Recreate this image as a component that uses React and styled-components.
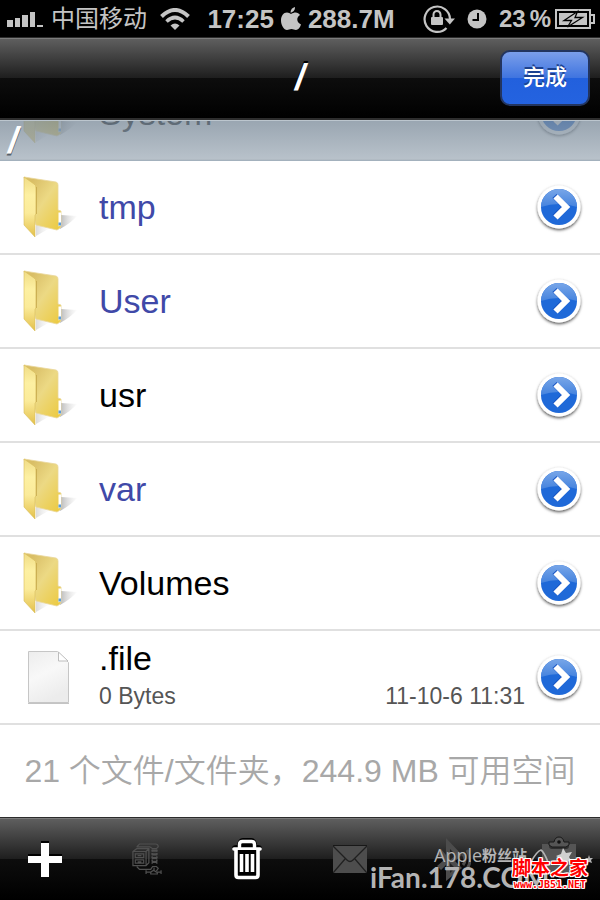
import React, { useState } from "react";
import styled, { createGlobalStyle } from "styled-components";

const GlobalStyle = createGlobalStyle`
  * {
    box-sizing: border-box;
  }
  body {
    margin: 0;
    background: #fff;
    font-family: "Liberation Sans", "Noto Sans CJK SC", sans-serif;
  }
  button {
    border: 0;
    padding: 0;
    background: none;
    font-family: inherit;
    cursor: pointer;
  }
  svg {
    display: block;
    flex: none;
  }
`;

const entries = [
  { name: "System", type: "folder" },
  { name: "tmp", type: "folder", link: true },
  { name: "User", type: "folder", link: true },
  { name: "usr", type: "folder" },
  { name: "var", type: "folder", link: true },
  { name: "Volumes", type: "folder" },
  { name: ".file", type: "file", size: "0 Bytes", date: "11-10-6 11:31" },
];

// Status bar icons

const SignalIcon = () => (
  <svg width="36" height="16" viewBox="0 0 36 16" fill="#c4c4c4">
    <path d="M0 9h6v7H0zM8 7h5v9H8zM15 4h6v12h-6zM23 1h5v15h-5zM30 14h6v2h-6z" />
  </svg>
);

const WifiIcon = () => (
  <svg width="30" height="22" viewBox="0 0 30 22" fill="none" stroke="#c4c4c4">
    <path d="M1.5 8.5Q15-4.5 28.5 8.5" strokeWidth="4" />
    <path d="M6.5 13.5Q15 5.5 23.5 13.5" strokeWidth="3.6" />
    <path d="M15 22l-4.500-4.500Q15 13.500 19.500 17.500z" fill="#c4c4c4" stroke="none" />
  </svg>
);

const AppleIcon = () => (
  <svg width="20" height="24" viewBox="0 0 20 24" fill="#c4c4c4">
    <path d="M10 7c2-1 3-1.500 4.500-1.500 2 0 3.500 1 4.500 2.500-4 2.500-3.500 7.500 1 9.500-1 3-3 5.500-5 5.500-1.800 0-2.500-1-4.500-1s-2.800 1-4.500 1C3 23 0 18 0 13.500 0 9 2.500 5.500 6 5.500c1.500 0 3 1 4 1.500z" />
    <path d="M9.500 5.500C9.500 2.500 11.500.5 14 0c.2 3-2 5.500-4.500 5.500z" />
  </svg>
);

const RotationLockIcon = () => (
  <svg width="32" height="30" viewBox="0 0 32 30" fill="#c4c4c4">
    <path
      d="M23.500 24A12.700 12.700 0 1 1 27 15"
      fill="none"
      stroke="#c4c4c4"
      strokeWidth="2.200"
    />
    <path d="M21.500 14.500H32l-5.200 6z" />
    <rect x="8" y="13" width="12" height="8" rx="1" />
    <path d="M10.500 13.500v-3a3.500 3.500 0 0 1 7 0v3" fill="none" stroke="#c4c4c4" strokeWidth="2" />
  </svg>
);

const ClockIcon = () => (
  <svg width="20" height="20" viewBox="0 0 20 20">
    <circle cx="10" cy="10" r="9.500" fill="#c4c4c4" />
    <path d="M11 4v7H5.500" fill="none" stroke="#000" strokeWidth="2" />
  </svg>
);

const BatteryIcon = () => (
  <svg width="40" height="20" viewBox="0 0 40 20">
    <rect x="1" y="1" width="34" height="18" fill="none" stroke="#c4c4c4" strokeWidth="2" />
    <path d="M35 6h4v8h-4" fill="none" stroke="#c4c4c4" strokeWidth="2" />
    <path d="M4 4h28v12H4z" fill="#c4c4c4" />
    <path
      d="M22.500 2.500L9 11.500h7.500L12.500 18 27.500 8.500H20z"
      fill="#c4c4c4"
      stroke="#000"
      strokeWidth="1.300"
    />
  </svg>
);

// List icons

const FolderIcon = () => (
  <svg width="60" height="64" viewBox="0 0 60 64">
    <defs>
      <linearGradient id="folderFront" x1="0" y1="0" x2="0" y2="1">
        <stop offset="0" stopColor="#f0dc86" />
        <stop offset="0.300" stopColor="#fdf0a2" />
        <stop offset="0.600" stopColor="#fbeb9a" />
        <stop offset="1" stopColor="#e3c04a" />
      </linearGradient>
      <linearGradient id="folderBack" x1="0" y1="0" x2="1" y2="1">
        <stop offset="0.150" stopColor="#d9be66" />
        <stop offset="0.500" stopColor="#ecd984" />
        <stop offset="1" stopColor="#ecc93c" />
      </linearGradient>
      <linearGradient id="folderShade" x1="0" y1="0" x2="1" y2="0">
        <stop offset="0" stopColor="#888" stopOpacity="0.600" />
        <stop offset="1" stopColor="#ccc" stopOpacity="0.050" />
      </linearGradient>
    </defs>
    <path d="M41 40l16 1q-6 7-17 13z" fill="url(#folderShade)" />
    <path d="M16 50l14 3-14 8z" fill="url(#folderShade)" opacity="0.500" />
    <path
      d="M4 2l32 5q2 .5 2 3v25l3 1v15q0 2-4 4l-21-5z"
      fill="url(#folderBack)"
      stroke="#ead79a"
      strokeWidth="0.800"
    />
    <path d="M38.500 37.500h2.500v13l-2.500 1z" fill="#fff" />
    <path d="M38.500 47.500h2.500v3h-2.500z" fill="#5d9dd8" />
    <path
      d="M4 2l10 7q2 1 2 4v26l-1 1v22L4 50z"
      fill="url(#folderFront)"
      stroke="#d9be5a"
      strokeWidth="0.600"
    />
    <path d="M16.400 12v27" stroke="#b99a3c" strokeWidth="1" opacity="0.600" />
  </svg>
);

const FileIcon = () => (
  <svg width="60" height="64" viewBox="0 0 60 64">
    <defs>
      <linearGradient id="paper" x1="0" y1="0" x2="0.400" y2="1">
        <stop offset="0" stopColor="#ededed" />
        <stop offset="0.500" stopColor="#f8f8f8" />
        <stop offset="1" stopColor="#ececec" />
      </linearGradient>
    </defs>
    <path d="M8.500 6.500h29l11 11v40h-40z" fill="url(#paper)" stroke="#c6c6c6" />
    <path d="M38.500 7v9h9.500z" fill="#fff" stroke="#bdbdbd" />
    <path d="M8 58.500h41" stroke="#c4c4c4" />
  </svg>
);

const DisclosureIcon = () => (
  <svg width="54" height="54" viewBox="0 0 54 54">
    <defs>
      <linearGradient id="discTop" x1="0" y1="0" x2="0" y2="1">
        <stop offset="0" stopColor="#78a6e8" />
        <stop offset="1" stopColor="#4583de" />
      </linearGradient>
      <filter id="discShadow" x="-30%" y="-30%" width="160%" height="170%">
        <feDropShadow dx="0" dy="1.500" stdDeviation="1.800" floodColor="#000" floodOpacity="0.700" />
      </filter>
    </defs>
    <circle cx="27" cy="27" r="21.500" fill="#fff" filter="url(#discShadow)" />
    <circle cx="27" cy="27" r="18" fill="#1f69d8" />
    <path d="M9 27a18 18 0 0 1 36 0Q27 21 9 27z" fill="url(#discTop)" />
    <path d="M22.500 16L33 26.500 22.500 37" fill="none" stroke="#1a57c4" strokeWidth="6" />
    <path d="M23.500 16.500L34 27 23.500 37.500" fill="none" stroke="#fff" strokeWidth="6" />
  </svg>
);

// Toolbar icons

const PlusIcon = () => (
  <svg width="34" height="36" viewBox="0 0 34 36">
    <path d="M13 0h8v13h13v8H21v13h-8V21H0v-8h13z" fill="#000" />
    <path d="M13 2h8v13h13v7H21v14h-8V22H0v-7h13z" fill="#fff" />
  </svg>
);

const ArchiveIcon = () => (
  <svg width="30" height="32" viewBox="0 0 32 34" fill="none" stroke="#505050" strokeWidth="1.300">
    <path d="M1 9l4-3h13v15l-3 3H1zM1 9h14v14M15 9l3-3" />
    <path d="M3.500 11.500h9v4h-9zM3.500 18h9v3.500h-9zM6 13.500h4M6 20h4" />
    <path d="M5 4l3-3h17q3 0 3 3l-2 2h-4l-3-2H5" />
    <path d="M5 25l3 3h12l2-3h4l2 2-2 3" />
    <path d="M21.500 7v15M26.500 7v15" strokeDasharray="2 1.500" strokeWidth="1.500" />
    <path d="M21 8h6M21 12h6M21 16h6M21 20h6" strokeWidth="2.500" />
    <path d="M15 31h5l3-2 3 2h5M15 29v4M31 29v4M20 31v2h7v-2M23.500 26v4" />
  </svg>
);

const TrashIcon = () => (
  <svg width="30" height="42" viewBox="0 0 30 42" fill="none" stroke="#fff">
    <path d="M0 10q0-3 5-3 1-7 6-7h8q5 0 6 7 5 0 5 3" fill="#000" stroke="none" />
    <path d="M7.500 10V6.500q0-3 3-3h9q3 0 3 3V10" strokeWidth="3.400" />
    <path d="M2 11h26" strokeWidth="3.600" strokeLinecap="round" />
    <path d="M4 12v25q0 2.500 2.500 2.500h17q2.500 0 2.500-2.500V12" strokeWidth="3.600" fill="#000" />
    <path d="M9.500 16v18M15 16v18M20.500 16v18" strokeWidth="3.600" />
  </svg>
);

const MailIcon = () => (
  <svg width="34" height="28" viewBox="0 0 34 28">
    <rect width="34" height="28" fill="#4d4d4d" />
    <path d="M0 0h34v1H0z" fill="#181818" />
    <path
      d="M0 1l14 14q3 3 6 0L34 1M0 28l12-14M34 28L22 14"
      fill="none"
      stroke="#202020"
      strokeWidth="1.300"
    />
  </svg>
);

const BluetoothIcon = () => (
  <svg width="34" height="46" viewBox="0 0 34 46" fill="none" stroke="#4c4c4c">
    <path d="M9 2l16 17-7 6 7 7L9 45V29l-5 5-4-4 7-6-7-6 4-5 5 6z" fill="#4c4c4c" stroke="none" />
    <path d="M13 13l6 6-6 5zM13 27l5 5-5 5z" fill="#222" stroke="none" />
    <path d="M26 18q4 6 0 11M30 14q6 10 0 19" strokeWidth="3" />
  </svg>
);

const ClipboardIcon = () => (
  <svg width="36" height="46" viewBox="0 0 36 46">
    <path d="M1 8h7v2q0 3 3 3h14q3 0 3-3V8h7v30H1z" fill="#555" />
    <path d="M8 9V6h5q1-5 5-5t5 5h5v3l-3 2H11z" fill="#555" stroke="#181818" />
    <circle cx="18" cy="6" r="1.800" fill="#111" />
  </svg>
);

const App = () => {
  const [path] = useState("/");

  return (
    <>
      <GlobalStyle />
      <Screen>
        <StatusBar>
          <StatusGroup $gap={8}>
            <SignalIcon />
            <Carrier>中国移动</Carrier>
            <WifiIcon />
          </StatusGroup>
          <StatusGroup $gap={7}>
            <StatusText>17:25</StatusText>
            <AppleIcon />
            <StatusText>288.7M</StatusText>
          </StatusGroup>
          <StatusGroup $gap={12} $end>
            <RotationLockIcon />
            <ClockIcon />
            <Battery>
              <span>23</span>
              <span>%</span>
              <BatteryIcon />
            </Battery>
          </StatusGroup>
        </StatusBar>

        <NavBar>
          <Title>{path}</Title>
          <DoneButton type="button">完成</DoneButton>
        </NavBar>

        <ListView>
          <PathHeader>{path}</PathHeader>
          <List>
            {entries.map((item) => (
              <Row key={item.name}>
                {item.type === "folder" ? <FolderIcon /> : <FileIcon />}
                <RowBody>
                  <Name $link={item.link}>{item.name}</Name>
                  {item.size && (
                    <Meta>
                      <span>{item.size}</span>
                      <span>{item.date}</span>
                    </Meta>
                  )}
                </RowBody>
                <button type="button" aria-label={item.name}>
                  <DisclosureIcon />
                </button>
              </Row>
            ))}
          </List>
          <Summary>21 个文件/文件夹，244.9 MB 可用空间</Summary>
        </ListView>

        <Toolbar>
          <button type="button" aria-label="添加">
            <PlusIcon />
          </button>
          <button type="button" aria-label="压缩">
            <ArchiveIcon />
          </button>
          <button type="button" aria-label="删除">
            <TrashIcon />
          </button>
          <button type="button" aria-label="邮件">
            <MailIcon />
          </button>
          <button type="button" aria-label="蓝牙">
            <BluetoothIcon />
          </button>
          <button type="button" aria-label="剪贴板">
            <ClipboardIcon />
          </button>
          <FanMark>
            <FanTop>
              Apple<b>粉丝站</b>
              <svg width="66" height="44" viewBox="0 0 66 44" fill="none" stroke="#b4b4b4">
                <path d="M4 16Q10 5 14 4q3 2 7 12" strokeWidth="1.600" />
                <path d="M25 37q1 6 6 4l2-8" strokeWidth="2" />
                <path
                  d="M36 2l3 5 6-1-3 5 3 5-6-1-4 4-1-6-5-3 5-2z"
                  fill="#d0d0d0"
                  stroke="none"
                />
                <path d="M62 9l1 3 3 0-2 2 1 3-3-1-3 1 1-3-2-2 3 0z" fill="#b4b4b4" stroke="none" />
              </svg>
            </FanTop>
            <FanSite>iFan.178.COM</FanSite>
          </FanMark>
          <SiteMark>
            <SiteName>脚本之家</SiteName>
            <SiteUrl>www.JB51.NET</SiteUrl>
          </SiteMark>
        </Toolbar>
      </Screen>
    </>
  );
};

export default App;

const Screen = styled.div`
  display: flex;
  flex-direction: column;
  height: 100vh;
  overflow: hidden;
`;

const StatusBar = styled.header`
  flex: none;
  display: grid;
  grid-template-columns: 1fr auto 1fr;
  align-items: center;
  height: 37px;
  padding: 0 5px 0 7px;
  background: #000;
  color: #c4c4c4;
`;

const StatusGroup = styled.div`
  display: flex;
  align-items: center;
  justify-content: ${(props) => (props.$end ? "flex-end" : "flex-start")};
  gap: ${(props) => props.$gap}px;
  white-space: nowrap;
`;

const Carrier = styled.span`
  margin-right: 5px;
  font-size: 24px;
  line-height: 36px;
`;

const StatusText = styled.span`
  font-size: 26px;
  font-weight: bold;
  line-height: 36px;
`;

const Battery = styled.div`
  display: flex;
  align-items: center;
  gap: 4px;
  font-size: 24px;
  font-weight: bold;
  line-height: 36px;
`;

const glossyBar = `
  border-top: 1px solid #2c2c2c;
  box-shadow: inset 0 1px #7c7c7c;
  background: linear-gradient(#606060, #1e1e1e 50%, #0d0d0d 50%, #000);
`;

const NavBar = styled.nav`
  ${glossyBar}
  flex: none;
  display: grid;
  grid-template-columns: 1fr auto 1fr;
  align-items: center;
  height: 83px;
  padding: 0 10px;
  border-bottom: 2px solid #2d2d2d;
`;

const Title = styled.h1`
  grid-column: 2;
  margin: 0;
  color: #fff;
  font-size: 36px;
  font-style: italic;
  line-height: 48px;
  text-shadow: 0 -2px #000;
`;

const DoneButton = styled.button`
  justify-self: end;
  width: 90px;
  height: 56px;
  border: 2px solid #23355f;
  border-radius: 10px;
  background: linear-gradient(#7b9fea, #3f74e0 50%, #2260dd 50%, #2463e0);
  color: #fff;
  font-size: 22px;
  font-weight: 500;
  line-height: 32px;
  text-shadow: 0 -2px #1c418f;
`;

const ListView = styled.main`
  position: relative;
  flex: 1;
  min-height: 0;
  display: flex;
  flex-direction: column;
  justify-content: flex-end;
  overflow: hidden;
  background: #fff;
`;

const PathHeader = styled.div`
  position: absolute;
  top: 0;
  left: 0;
  right: 0;
  height: 41px;
  padding: 0 8px;
  border-top: 1px solid #bcc6ce;
  border-bottom: 1px solid #a3b1bd;
  background: linear-gradient(rgba(122, 138, 153, 0.76), rgba(165, 177, 188, 0.78));
  color: #fff;
  font-size: 36px;
  font-style: italic;
  font-weight: bold;
  line-height: 40px;
  text-shadow: 0 2px #55606a;
`;

const List = styled.ul`
  margin: 0;
  padding: 0;
  list-style: none;
`;

const Row = styled.li`
  display: flex;
  align-items: center;
  height: 94px;
  padding: 0 14px 0 20px;
  border-bottom: 2px solid #e0e0e0;
`;

const RowBody = styled.div`
  flex: 1;
  padding: 0 7px 0 19px;
`;

const Name = styled.div`
  color: ${(props) => (props.$link ? "#4049a8" : "#000")};
  font-size: 34px;
  line-height: 44px;
`;

const Meta = styled.div`
  display: flex;
  justify-content: space-between;
  padding-bottom: 6px;
  color: #555;
  font-size: 23px;
  line-height: 32px;
`;

const Summary = styled.p`
  margin: 0;
  color: #a8a8a8;
  font-size: 32px;
  font-weight: 350;
  line-height: 92px;
  text-align: center;
  white-space: nowrap;
`;

const Toolbar = styled.footer`
  ${glossyBar}
  position: relative;
  flex: none;
  display: flex;
  align-items: center;
  justify-content: space-between;
  height: 83px;
  padding: 0 23px 0 28px;
`;

const FanMark = styled.div`
  position: absolute;
  right: 4px;
  bottom: 6px;
  width: 226px;
  color: #b4b4b4;
  white-space: nowrap;
`;

const FanTop = styled.div`
  display: flex;
  height: 22px;
  padding-left: 64px;
  font-family: "Open Sans", "Noto Sans CJK SC", sans-serif;
  font-size: 18px;
  line-height: 18px;

  b {
    font-size: 15px;
  }
`;

const FanSite = styled.div`
  font-family: Lato, sans-serif;
  font-size: 28px;
  font-weight: bold;
  line-height: 18px;
  padding-bottom: 8px;
`;

const SiteMark = styled.div`
  position: absolute;
  right: 12px;
  bottom: 9px;
  color: #f00;
  text-align: center;
  text-shadow: 1px 0 #fff, -1px 0 #fff, 0 1px #fff, 0 -1px #fff, 1px 1px #fff,
    -1px -1px #fff, 1px -1px #fff, -1px 1px #fff;
`;

const SiteName = styled.div`
  font-size: 19px;
  font-weight: bold;
  line-height: 20px;
`;

const SiteUrl = styled.div`
  font-family: "DejaVu Sans Mono", monospace;
  font-size: 10px;
  font-weight: bold;
  line-height: 12px;
`;
